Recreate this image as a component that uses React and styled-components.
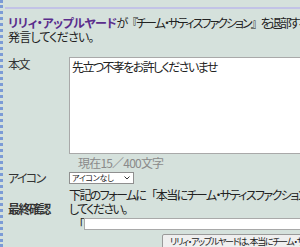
import styled, { createGlobalStyle } from "styled-components";

const Global = createGlobalStyle`
  html, body {
    margin: 0;
    padding: 0;
    overflow: hidden;
    background: #d5e1dc;
  }
  body {
    font-family: "Noto Sans CJK JP", "Noto Sans", sans-serif;
    font-size: 12px;
    color: #222;
    font-feature-settings: "palt";
    letter-spacing: -1.6px;
  }
`;

const Page = styled.div`
  width: 300px;
  height: 247px;
  border-left: 3px dotted #7b9bd6;
  box-sizing: border-box;
  padding-left: 2px;
  overflow: hidden;
  white-space: nowrap;
`;

const Panel = styled.div`
  margin-top: 7px;
  border-top: 2px solid #c2c3e6;
  padding: 7px 0 0 3px;
  width: 500px;
`;

const Intro = styled.p`
  margin: 0 0 13px;
  line-height: 14px;
`;

const Tail = styled.span`
  letter-spacing: ${({ $ls }) => $ls}px;
`;

const Name = styled.b`
  color: #5a2d8c;
  letter-spacing: -0.5px;
`;

const Bracket = styled.span`
  font-feature-settings: normal;
`;

const Row = styled.div`
  display: grid;
  grid-template-columns: 61px 1fr;
  align-items: ${({ $align }) => $align || "start"};
  margin-bottom: ${({ $gap }) => $gap || 0}px;
`;

const Label = styled.div`
  line-height: 14px;
  padding-top: ${({ $top }) => $top || 0}px;
  font-weight: ${({ $bold }) => ($bold ? "bold" : "normal")};
  color: #333;
`;

const Cell = styled.div`
  line-height: 14px;
`;

const TextArea = styled.div`
  width: 380px;
  height: 91px;
  background: #fff;
  border: 1px solid #a9a9a9;
  padding: 2px 2px;
  line-height: 14px;
  color: #222;
`;

const Counter = styled.div`
  color: #8a8a8a;
  padding: 2px 0 1px 9px;
  line-height: 14px;
  letter-spacing: -0.8px;
`;

const Select = styled.div`
  width: 58px;
  height: 10px;
  background: #fff;
  border: 1px solid #8f8f8f;
  display: flex;
  align-items: center;
  justify-content: space-between;
  padding: 0 3px 0 2px;
  font-size: 8px;
  line-height: 10px;
  letter-spacing: -0.3px;
`;

const Caret = styled.svg`
  width: 6px;
  height: 4px;
`;

const Confirm = styled.div`
  display: flex;
  align-items: center;
  padding: 2px 0 0 4px;
  line-height: 12px;
`;

const Input = styled.div`
  width: 300px;
  height: 10px;
  background: #fff;
  border: 1px solid #a9a9a9;
  margin-left: 1px;
`;

const Button = styled.div`
  margin: 4px 0 0 93px;
  width: 300px;
  height: 13px;
  background: #efefef;
  border: 1px solid #9a9a9a;
  border-radius: 2px;
  font-size: 9px;
  line-height: 13px;
  padding-left: 7px;
  letter-spacing: -1.3px;
  color: #222;
`;

export default function App() {
  return (
    <>
      <Global />
      <Page>
        <Panel>
          <Intro>
            <Name>リリィ・アップルヤード</Name>
            <Tail $ls={-2}>
              が<Bracket>『</Bracket>チーム・サティスファクション<Bracket>』</Bracket>を退部するにあたって
            </Tail>
            <br />
            <Tail $ls={-0.8}>発言してください。</Tail>
          </Intro>
          <Row>
            <Label>本文</Label>
            <Cell>
              <TextArea>先立つ不孝をお許しくださいませ</TextArea>
              <Counter>現在15／400文字</Counter>
            </Cell>
          </Row>
          <Row $align="center" $gap={3}>
            <Label>アイコン</Label>
            <Cell>
              <Select>
                アイコンなし
                <Caret viewBox="0 0 6 4">
                  <path d="M0.5 0.5 L3 3 L5.5 0.5" fill="none" stroke="#333" strokeWidth="1" />
                </Caret>
              </Select>
            </Cell>
          </Row>
          <Row $align="start">
            <Label $top={14} $bold>最終確認</Label>
            <Cell>
              下記のフォームに<Bracket>「</Bracket>本当にチーム・サティスファクションを退部します
              <Bracket>」</Bracket>と入力
              <br />
              してください。
              <Confirm>
                <Bracket>「</Bracket>
                <Input />
              </Confirm>
              <Button>リリィ・アップルヤードは、本当にチーム・サティスファクションを退部します</Button>
            </Cell>
          </Row>
        </Panel>
      </Page>
    </>
  );
}
